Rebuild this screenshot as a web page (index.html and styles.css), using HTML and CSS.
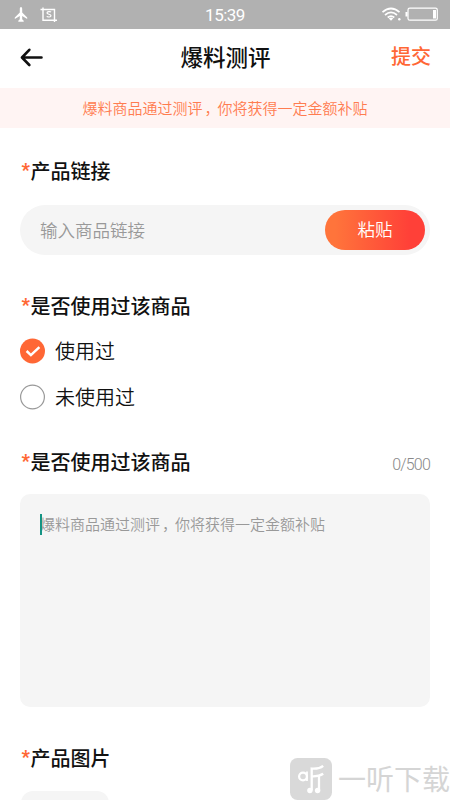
FILE: index.html
```
<!DOCTYPE html>
<html lang="zh-CN">
<head>
<meta charset="utf-8">
<title>爆料测评</title>
<link rel="stylesheet" href="styles.css">
</head>
<body>
<div class="screen">
  <div class="status">
    <svg class="status-left" width="60" height="28" viewBox="0 0 60 28" fill="none" stroke="#fff">
      <path d="M21 7c.9 0 1.200 1 1.200 2.200v3.400l5 4.800v1.500l-5-2.900v3.300l1.500 1.500v.9H18.300v-.9l1.500-1.500v-3.300l-5 2.900v-1.500l5-4.800V9.200C19.800 8 20.100 7 21 7z" fill="#fff" stroke="none"/>
      <path d="M40.500 9.500H54.500V22M43 7.500V20.200H57" stroke-width="1.400"/>
      <path d="M51 12.200c-.5-.7-4-.9-4 .8 0 1.600 4 .9 4 2.700 0 1.700-3.600 1.600-4.200.5" stroke-width="1.200"/>
    </svg>
    <span class="time">15:39</span>
    <svg class="status-right" width="70" height="28" viewBox="0 0 70 28" fill="none" stroke="#fff">
      <path d="M2.500 12.200Q11 4.800 19.500 12.200M5 15Q11 9.800 17 15M7.700 17.500Q11 14.800 14.300 17.500" stroke-width="1.700"/>
      <path d="M8.800 18.400Q11 16.800 13.200 18.400L11 20.700z" fill="#fff" stroke="none"/>
      <circle cx="19.300" cy="19.200" r="1.200" fill="#fff" stroke="none"/>
      <rect x="28" y="8.200" width="29.300" height="12" rx="1.800" stroke-width="1.200"/>
      <path d="M25.500 12h2v4.500h-2zM53 10h3v8.500h-3z" fill="#fff" stroke="none"/>
    </svg>
  </div>
  <header class="header">
    <svg class="back" width="24" height="20" viewBox="0 0 24 20" fill="none" stroke="#111" stroke-width="2.600" stroke-linecap="round" stroke-linejoin="round"><path d="M9.300 1.800L2 9.500l7.300 7.500M2.500 9.500H21.500"/></svg>
    <h1 class="title">爆料测评</h1>
    <span class="submit">提交</span>
  </header>
  <div class="notice">爆料商品通过测评<span class="comma">，</span>你将获得一定金额补贴</div>
  <main class="form">
    <h2 class="label"><span class="star">*</span>产品链接</h2>
    <div class="link-field"><span>输入商品链接</span><span class="paste">粘贴</span></div>
    <h2 class="label label-used"><span class="star">*</span>是否使用过该商品</h2>
    <div class="options">
      <div class="option">
        <svg width="26" height="26" viewBox="0 0 26 26"><circle cx="12.500" cy="13" r="12.500" fill="#ff6735"/><path d="M6.600 13l4.300 4.100 8.500-8" fill="none" stroke="#fff" stroke-width="2.500"/></svg>
        <span>使用过</span>
      </div>
      <div class="option">
        <svg width="26" height="26" viewBox="0 0 26 26"><circle cx="12.500" cy="13" r="11.900" fill="#fff" stroke="#999" stroke-width="1.200"/></svg>
        <span>未使用过</span>
      </div>
    </div>
    <div class="label-row">
      <h2 class="label"><span class="star">*</span>是否使用过该商品</h2>
      <span class="count">0/500</span>
    </div>
    <div class="textarea"><span class="caret"></span>爆料商品通过测评<span class="comma">，</span>你将获得一定金额补贴</div>
    <h2 class="label label-photo"><span class="star">*</span>产品图片</h2>
    <div class="upload"></div>
  </main>
  <div class="watermark">
    <svg width="42" height="42" viewBox="0 0 42 42" fill="none" stroke="#fff">
      <rect width="42" height="42" rx="7.500" fill="#d9d9d9" stroke="none"/>
      <circle cx="13" cy="18.500" r="3.900" stroke-width="2.300"/>
      <path d="M17 13.500v9.500" stroke-width="1.800"/>
      <path d="M33.200 7.800Q29 11.200 21.700 10.600V32.500M21.900 18.300Q29 18.600 33.200 15.800M29 18V32.500" stroke-width="2.300"/>
      <circle cx="19.900" cy="32.500" r="2.700" fill="#fff" stroke="none"/><circle cx="27.600" cy="32.500" r="2.700" fill="#fff" stroke="none"/>
    </svg>
    <span class="brand">一听下载</span>
  </div>
</div>
</body>
</html>
```
FILE: styles.css
```
* { box-sizing: border-box; }
body {
  margin: 0;
  background: #fff;
  color: #111;
  font-family: "Noto Sans CJK SC", sans-serif;
  font-weight: 350;
}
h1, h2 { margin: 0; }
svg { display: block; flex: none; }
.screen {
  position: relative;
  width: 450px;
  height: 800px;
  overflow: hidden;
}
.status {
  display: grid;
  grid-template-columns: 1fr auto 1fr;
  height: 29px;
  background: #b1b1b1;
}
.status-right { justify-self: end; }
.time {
  color: #fff;
  font: 17px/30px Roboto, sans-serif;
  letter-spacing: -0.5px;
}
.header {
  display: grid;
  grid-template-columns: 1fr auto 1fr;
  align-items: center;
  height: 59px;
  padding: 0 19px 2px 20px;
}
.title { padding-bottom: 4px; font-size: 22.5px; line-height: 32px; font-weight: 500; }
.submit {
  justify-self: end;
  padding-bottom: 3px;
  color: #ff6735;
  font-size: 20px;
  line-height: 30px;
  font-weight: 500;
}
.notice {
  height: 40px;
  background: #fff4f3;
  color: #ff7c50;
  font-size: 15px;
  line-height: 39px;
  text-align: center;
}
.comma { padding-left: 2px; margin-right: -2px; }
.form { padding: 28px 20px 0; }
.label {
  display: flex;
  height: 30px;
  font-size: 20px;
  line-height: 30px;
  font-weight: 500;
}
.star {
  width: 10.5px;
  padding-left: 1.500px;
  color: #ff6735;
  font-family: Roboto, sans-serif;
  font-size: 18px;
  font-weight: 900;
  line-height: 28px;
}
.link-field {
  display: flex;
  align-items: center;
  justify-content: space-between;
  height: 50px;
  margin-top: 19px;
  padding: 0 5px 0 20px;
  border-radius: 25px;
  background: #f5f5f5;
  color: #999;
  font-size: 17.5px;
  line-height: 24px;
}
.link-field > span:first-child { padding-bottom: 1px; }
.paste {
  width: 100px;
  height: 40px;
  border-radius: 20px;
  background: linear-gradient(90deg, #ff743b 10%, #ff4038 85%);
  color: #fff;
  line-height: 38px;
  text-align: center;
}
.label-used { margin-top: 36px; }
.options { display: grid; gap: 16px; margin-top: 15px; }
.option {
  display: flex;
  align-items: center;
  gap: 9px;
  height: 30px;
  font-size: 20px;
  line-height: 30px;
}
.label-row {
  display: flex;
  justify-content: space-between;
  height: 30px;
  margin-top: 35px;
}
.count {
  padding-top: 3px;
  color: #888;
  font: 300 16px/30px Roboto, sans-serif;
  letter-spacing: -0.8px;
}
.textarea {
  position: relative;
  height: 213px;
  margin-top: 17px;
  padding: 15px 20px;
  border-radius: 10px;
  background: #f5f5f5;
  color: #999;
  font-size: 15px;
  line-height: 30px;
}
.caret {
  position: absolute;
  left: 20px;
  top: 20px;
  width: 2px;
  height: 21px;
  background: #159483;
}
.label-photo { margin-top: 36px; }
.upload {
  width: 88px;
  height: 88px;
  margin: 18px 0 0 1px;
  border-radius: 12px;
  background: #f5f5f5;
}
.watermark {
  position: absolute;
  left: 290px;
  top: 758px;
  display: flex;
  gap: 6px;
  color: #d5d5d5;
  font-size: 28px;
  font-weight: 400;
  line-height: 40px;
  white-space: nowrap;
}
```
